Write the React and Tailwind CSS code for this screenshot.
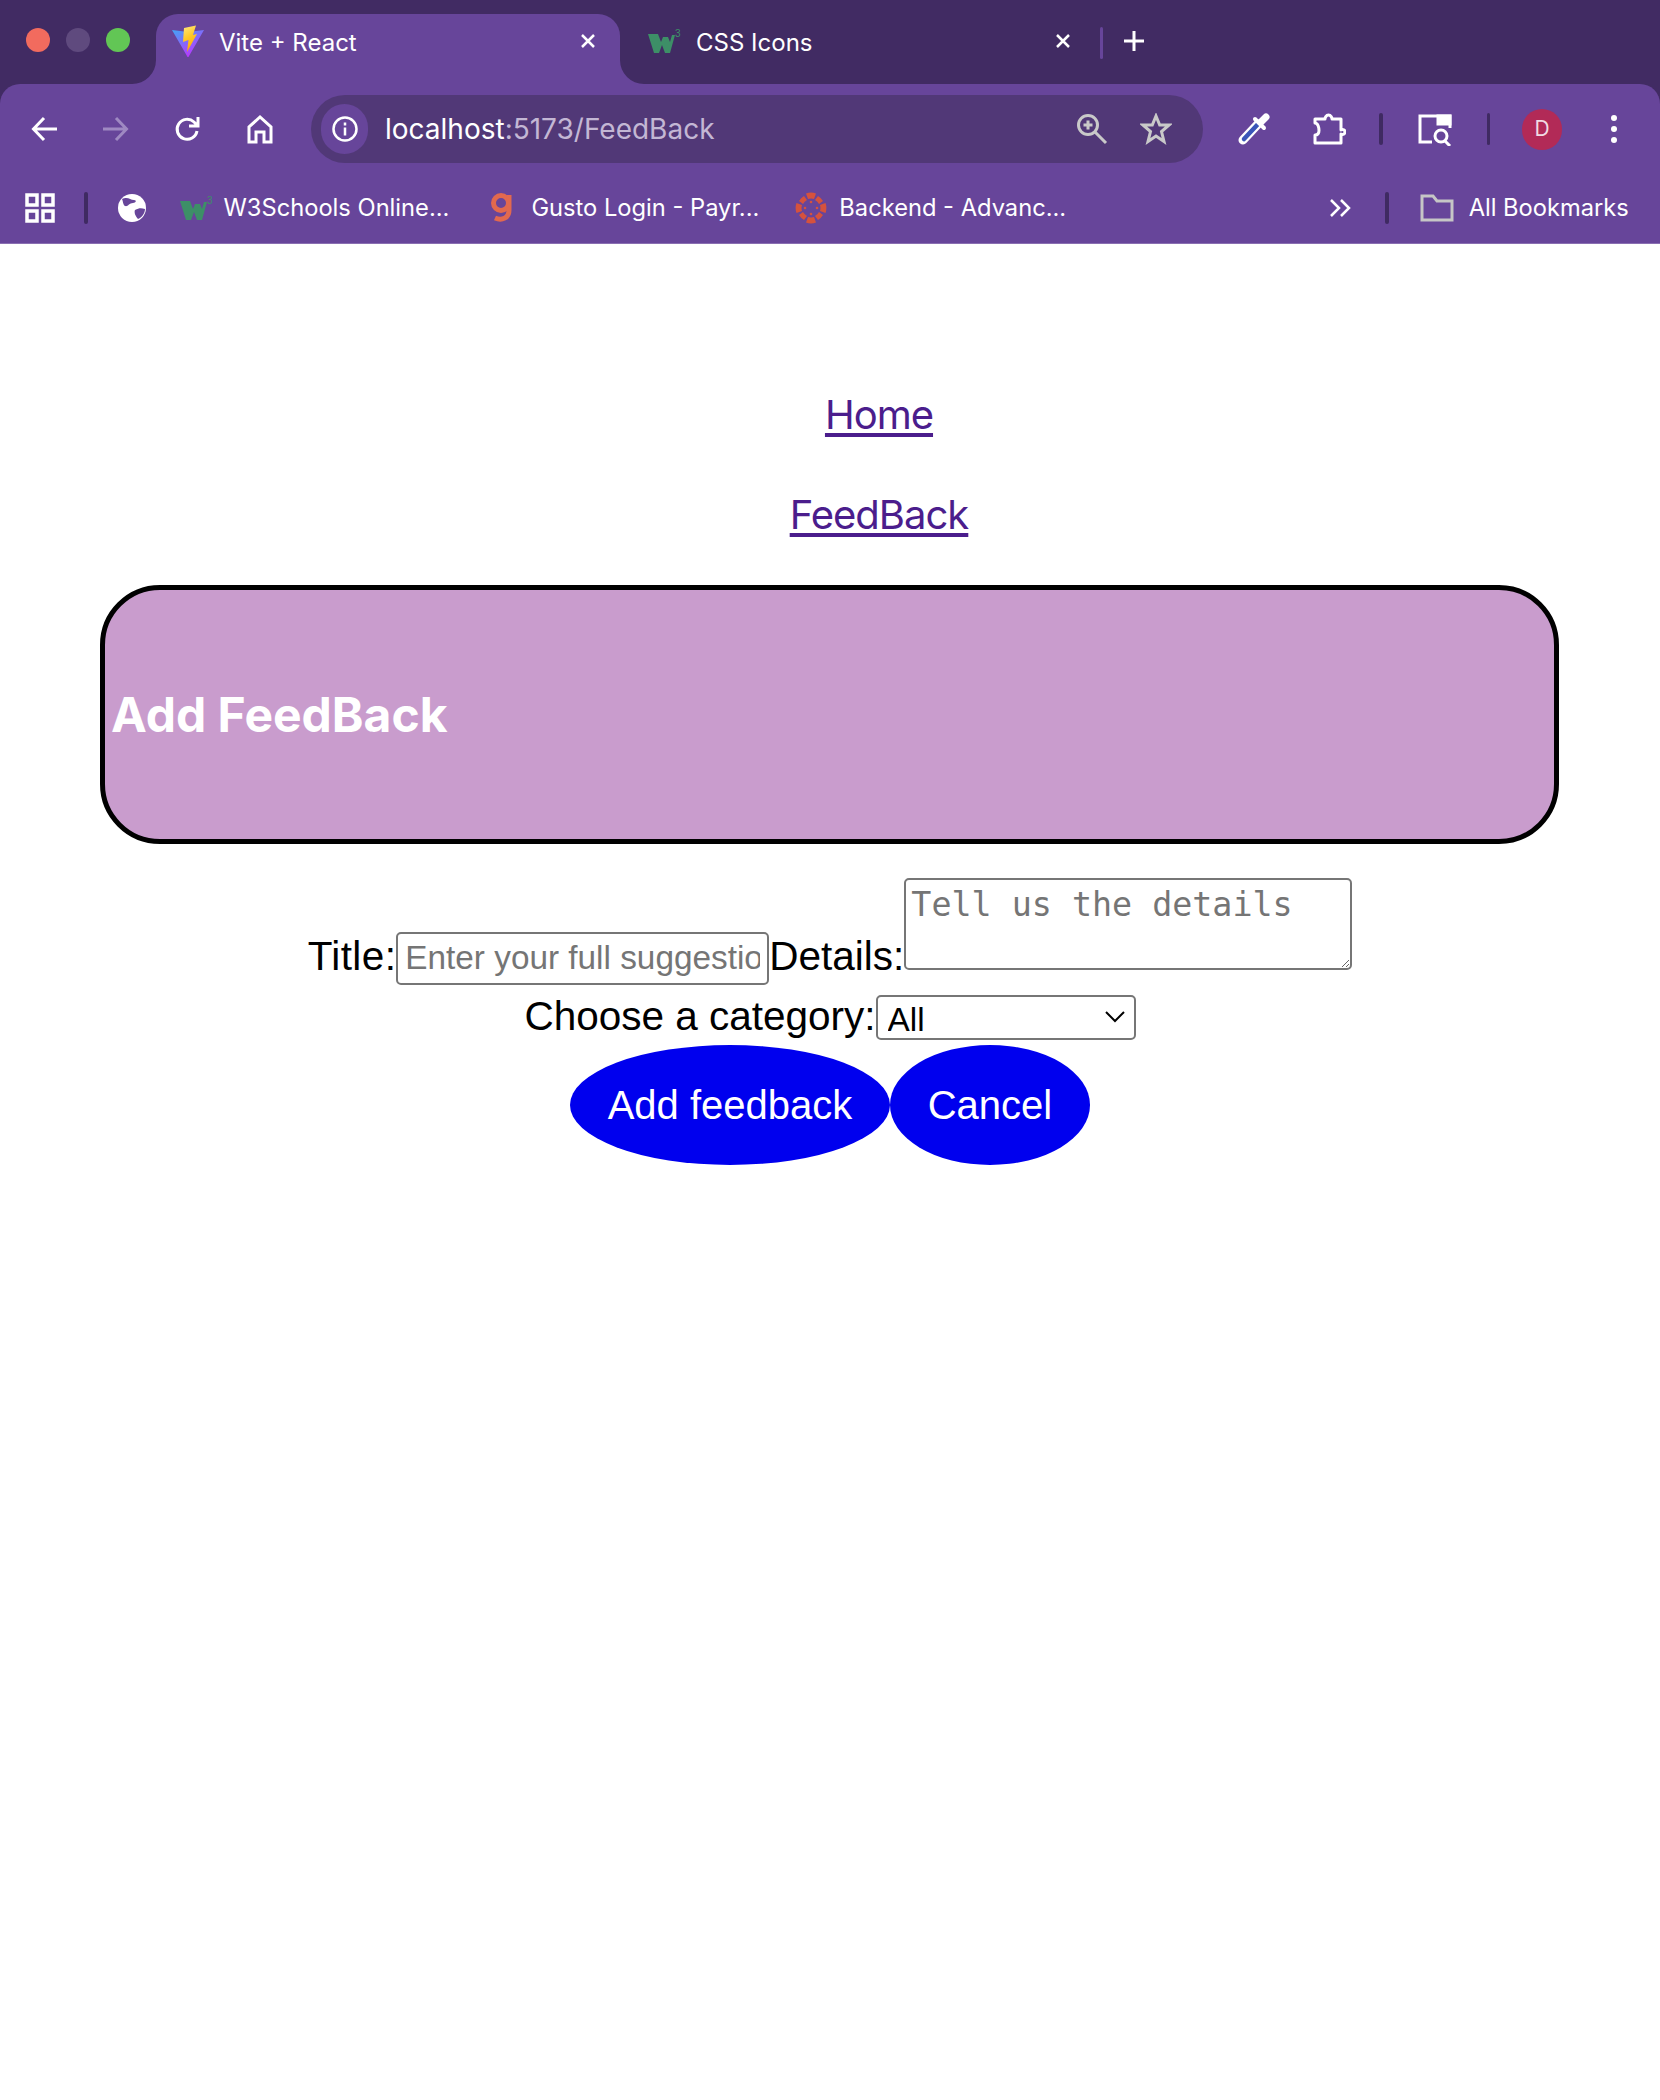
import * as React from "react";

const W3 = ({ className }) => (
  <svg viewBox="0 0 34 24" className={className}>
    <path d="M0 5h10l3 8 2-5h5l2 5 2-7h3l-5 18h-5l-3-8-3 8H6z" fill="#3d8f67" />
    <text x="27" y="8" fontSize="10" fill="#3d8f67" fontFamily="Liberation Sans, sans-serif">3</text>
  </svg>
);

const ViteLogo = () => (
  <svg viewBox="0 0 34 34" className="h-[34px] w-[34px]">
    <defs>
      <linearGradient id="vg" x1="0" y1="0" x2="0.6" y2="1">
        <stop offset="0" stopColor="#41a5f5" />
        <stop offset="1" stopColor="#bd34fe" />
      </linearGradient>
      <linearGradient id="vb" x1="0" y1="0" x2="0.3" y2="1">
        <stop offset="0" stopColor="#ffea83" />
        <stop offset="0.5" stopColor="#ffc928" />
        <stop offset="1" stopColor="#ffa800" />
      </linearGradient>
    </defs>
    <path d="M1 7l16 2L33 7 18 33a1 1 0 0 1-2 0z" fill="url(#vg)" />
    <path d="M13 5l12-2.500-3 9.500 4-1-10 18 1.500-12-5.500 2z" fill="url(#vb)" />
  </svg>
);

const Sep = ({ className = "" }) => <div className={`w-[3.500px] rounded-full bg-[#3f2a62] ${className}`} />;

const Stroke = ({ children, className, box = "0 0 32 32", color = "#fff", sw = 3 }) => (
  <svg viewBox={box} fill="none" stroke={color} strokeWidth={sw} className={className}>
    {children}
  </svg>
);

const Close = ({ className }) => (
  <Stroke className={className} box="0 0 16 16" sw={2.500}>
    <path d="M2 2l12 12M14 2L2 14" />
  </Stroke>
);

const Browser = () => (
  <div className="bg-[#412b63] font-['Inter',sans-serif] text-white">
    <div className="flex h-[84px] items-start">
      <div className="flex h-[80px] w-[156px] items-center gap-[16px] pl-[26px]">
        <div className="h-[24px] w-[24px] rounded-full bg-[#f26b5e]" />
        <div className="h-[24px] w-[24px] rounded-full bg-[#5f4a7e]" />
        <div className="h-[24px] w-[24px] rounded-full bg-[#62c655]" />
      </div>
      <div className="relative mt-[14px] flex h-[70px] w-[464px] items-start rounded-t-[22px] bg-[#67459a] pl-[15px] pt-[9px]">
        <svg viewBox="0 0 24 24" className="absolute bottom-0 left-[-24px] h-[24px] w-[24px]">
          <path d="M24 0v24H0A24 24 0 0 0 24 0z" fill="#67459a" />
        </svg>
        <svg viewBox="0 0 24 24" className="absolute bottom-0 right-[-24px] h-[24px] w-[24px]">
          <path d="M0 0v24h24A24 24 0 0 1 0 0z" fill="#67459a" />
        </svg>
        <ViteLogo />
        <span className="ml-[14px] mt-[5px] text-[24px] leading-[29px]">Vite + React</span>
        <Close className="ml-auto mr-[24px] mt-[10px] h-[16px] w-[16px]" />
      </div>
      <div className="mt-[14px] flex h-[70px] w-[525px] items-start pl-[28px] pt-[9px]">
        <W3 className="mt-[6px] h-[24px] w-[34px]" />
        <span className="ml-[14px] mt-[5px] text-[24px] leading-[29px]">CSS Icons</span>
        <Close className="ml-auto mr-[29px] mt-[10px] h-[16px] w-[16px]" />
        <Sep className="mt-[4px] h-[32px] !bg-[#67459a]" />
        <Stroke className="ml-[20px] mt-[7px] h-[22px] w-[22px]" box="0 0 22 22">
          <path d="M11 1v20M1 11h20" />
        </Stroke>
      </div>
    </div>

    <div className="rounded-t-[20px] bg-[#67459a]">
      <div className="flex h-[90px] items-center">
        <Stroke className="ml-[31px] h-[28px] w-[28px]" box="0 0 28 28">
          <path d="M26 14H3M13 3L2.500 14 13 25" />
        </Stroke>
        <Stroke className="ml-[42px] h-[28px] w-[28px]" box="0 0 28 28" color="#9f89c2">
          <path d="M2 14h23M15 3l10.500 11L15 25" />
        </Stroke>
        <Stroke className="ml-[45px] h-[28px] w-[28px]" box="0 0 28 28">
          <path d="M23 16a10 10 0 1 1-3-9l4 4M24 2v9h-9" />
        </Stroke>
        <Stroke className="ml-[44px] h-[30px] w-[28px]" box="0 0 28 30">
          <path d="M3 28V13L14 3l11 10v15h-7v-10h-8v10z" />
        </Stroke>
        <div className="ml-[37px] flex h-[68px] w-[892px] items-center rounded-full bg-[#513877] pl-[10px]">
          <div className="flex h-[50px] w-[47px] items-center justify-center rounded-full bg-[#67459a]">
            <Stroke className="h-[26px] w-[26px]" box="0 0 26 26" sw={2.500}>
              <circle cx="13" cy="13" r="11.500" />
              <path d="M13 11.500v8M13 6.500v3" />
            </Stroke>
          </div>
          <span className="ml-[17px] text-[28px] leading-[34px]">
            localhost<span className="text-[#c3b7d4]">:5173/FeedBack</span>
          </span>
          <Stroke className="ml-[361px] h-[32px] w-[32px]" box="0 0 32 32" color="#c9c9c9" sw={3}>
            <circle cx="12" cy="12" r="9.500" />
            <path d="M19 19l11 11M12 7.500v9M7.500 12h9" />
          </Stroke>
          <Stroke className="ml-[32px] h-[32px] w-[32px]" box="0 0 32 32" color="#c9c9c9" sw={3}>
            <path d="M16 3l3.700 9h9.300l-7.500 6.500 2.500 10L16 23l-8 5.500 2.500-10L3 12h9.300z" />
          </Stroke>
        </div>
        <svg viewBox="0 0 32 32" fill="none" strokeLinecap="round" className="ml-[35px] h-[32px] w-[32px]">
          <path d="M5 27L20 11" stroke="#fff" strokeWidth="9" />
          <path d="M6 26l15-16" stroke="#3a56b8" strokeWidth="4.500" />
          <path d="M17 6l9 9" stroke="#fff" strokeWidth="4" />
          <path d="M23 9l5-5" stroke="#fff" strokeWidth="7" />
        </svg>
        <Stroke className="ml-[42px] h-[34px] w-[34px]" box="0 0 34 34">
          <path d="M3 7h10c0-1 1-4 3.500-4S20 6 20 7h9v11c2-1 4 0 4 2s-2 3-4 2v9H3v-8c3 0 4-2 4-4.500S6 11 3 11z" strokeLinejoin="round" />
        </Stroke>
        <Sep className="ml-[33px] h-[32px]" />
        <Stroke className="ml-[35px] h-[34px] w-[34px]" box="0 0 34 34">
          <path d="M14 30H2V4h30v12" />
          <path d="M20 4h12v8H20z" fill="#fff" />
          <circle cx="23" cy="24" r="6" />
          <path d="M27 29l5 5" />
        </Stroke>
        <Sep className="ml-[35px] h-[32px]" />
        <div className="ml-[32px] flex h-[41px] w-[40px] items-center justify-center rounded-full bg-[#b22a57] text-[21px] text-[#f1dbe3]">
          D
        </div>
        <div className="ml-[49px] flex flex-col gap-[5px]">
          <div className="h-[6px] w-[6px] rounded-full bg-white" />
          <div className="h-[6px] w-[6px] rounded-full bg-white" />
          <div className="h-[6px] w-[6px] rounded-full bg-white" />
        </div>
      </div>

      <div className="flex h-[67px] items-center text-[23.700px] leading-[29px]">
        <svg viewBox="0 0 30 30" fill="none" stroke="#fff" strokeWidth="3.500" className="ml-[25px] h-[30px] w-[30px]">
          <rect x="2" y="2" width="10" height="10" />
          <rect x="18" y="2" width="10" height="10" />
          <rect x="2" y="18" width="10" height="10" />
          <rect x="18" y="18" width="10" height="10" />
        </svg>
        <Sep className="ml-[29px] h-[32px]" />
        <svg viewBox="0 0 30 30" className="ml-[29px] h-[30px] w-[30px]">
          <circle cx="15" cy="15" r="14" fill="#fff" />
          <path d="M5 6c6-3 8 1 12 1 3 0 2 3-1 3-4 0-5 4-8 3-2-1-2-5-3-7zM18 17c4-2 6-2 10-1 0 5-4 9-7 10-3-3-4-7-3-9z" fill="#67459a" />
        </svg>
        <W3 className="ml-[33px] h-[24px] w-[34px]" />
        <span className="ml-[10px]">W3Schools Online...</span>
        <svg viewBox="0 0 24 32" fill="none" stroke="#e2694e" strokeWidth="5" className="ml-[40px] h-[32px] w-[24px]">
          <circle cx="12" cy="11" r="7.500" />
          <path d="M20 3v15c0 8-7 11-14 8" />
        </svg>
        <span className="ml-[18px]">Gusto Login - Payr...</span>
        <svg viewBox="0 0 32 32" fill="#d5523d" className="ml-[36px] h-[32px] w-[32px]">
          <path d="M11 1.500a15 15 0 0 1 10 0L19 7a10 10 0 0 0-6 0zM11 30.500a15 15 0 0 0 10 0L19 25a10 10 0 0 1-6 0zM1.500 11a15 15 0 0 0 0 10L7 19a10 10 0 0 1 0-6zM30.500 11a15 15 0 0 1 0 10L25 19a10 10 0 0 0 0-6z" />
          <path d="M4 9a15 15 0 0 1 5-5l3 4a10 10 0 0 0-4 4zM28 9a15 15 0 0 0-5-5l-3 4a10 10 0 0 1 4 4zM4 23a15 15 0 0 0 5 5l3-4a10 10 0 0 1-4-4zM28 23a15 15 0 0 1-5 5l-3-4a10 10 0 0 0 4-4z" />
          <circle cx="16" cy="10" r="1.300" />
          <circle cx="16" cy="22" r="1.300" />
          <circle cx="10" cy="16" r="1.300" />
          <circle cx="22" cy="16" r="1.300" />
        </svg>
        <span className="ml-[12px]">Backend - Advanc...</span>
        <Stroke className="ml-[263px] h-[20px] w-[22px]" box="0 0 22 20" sw={2.500}>
          <path d="M2 2l8 8-8 8M12 2l8 8-8 8" />
        </Stroke>
        <Sep className="ml-[34px] h-[32px]" />
        <Stroke className="ml-[31px] h-[28px] w-[34px]" box="0 0 34 28" color="#c6c6c6" sw={3}>
          <path d="M2 26V2h11l4 5h15v19z" />
        </Stroke>
        <span className="ml-[15px]">All Bookmarks</span>
      </div>
      <div className="h-[2px]" />
      <div className="h-[1px] bg-[#8a6fb2]" />
    </div>
  </div>
);

const App = () => (
  <div className="min-h-[2100px] bg-white font-['Liberation_Sans',sans-serif] text-[40.500px] leading-[46px] text-black">
    <Browser />
    <nav className="flex flex-col items-center gap-[54px] pl-[98px] pt-[148px] font-['Inter',sans-serif] text-[40px] tracking-[-1px] text-[#4b1d8c]">
      <a href="#" className="underline decoration-[3.500px] underline-offset-[4px]">Home</a>
      <a href="#" className="underline decoration-[3.500px] underline-offset-[4px]">FeedBack</a>
    </nav>
    <div className="ml-[100px] mr-[101px] mt-[47px] flex h-[259px] items-center rounded-[60px] border-[5px] border-black bg-[#c99ccd] pl-[6px]">
      <h1 className="font-['Inter',sans-serif] text-[48px] font-bold text-white">Add FeedBack</h1>
    </div>
    <form className="mt-[34px] text-center">
      <label className="tracking-[0.4px]">Title:</label>
      <input
        placeholder="Enter your full suggestion"
        className="inline-block h-[53px] w-[373px] rounded-[5px] border-[2.500px] border-[#767676] px-[7px] align-[1px] text-[33.330px] placeholder:text-[#757575]"
      />
      <label>Details:</label>
      <textarea
        placeholder="Tell us the details"
        className="inline-block h-[92px] w-[448px] resize rounded-[5px] border-[2.500px] border-[#767676] px-[5px] pt-[5px] font-['DejaVu_Sans_Mono',monospace] text-[33.330px] leading-[39px] placeholder:text-[#757575]"
      />
      <div className="mt-[8px] h-[46px]">
        <label>Choose a category:</label>
        <span className="relative inline-block align-[-1px]">
          <select className="block h-[45px] w-[260px] appearance-none rounded-[5px] border-[2.500px] border-[#767676] bg-white pl-[10px] text-[33.330px]">
            <option>All</option>
          </select>
          <svg viewBox="0 0 20 12" fill="none" stroke="#000" strokeWidth="2" className="absolute right-[11px] top-[16px] h-[12px] w-[20px]">
            <path d="M1 1l9 9 9-9" />
          </svg>
        </span>
      </div>
      <div className="mt-[6px] flex justify-center">
        <button type="button" className="h-[120px] w-[320px] rounded-[50%] bg-[#0000ee] text-[40px] text-white">Add feedback</button>
        <button type="button" className="h-[120px] w-[200px] rounded-[50%] bg-[#0000ee] text-[40px] text-white">Cancel</button>
      </div>
    </form>
  </div>
);

export default App;
